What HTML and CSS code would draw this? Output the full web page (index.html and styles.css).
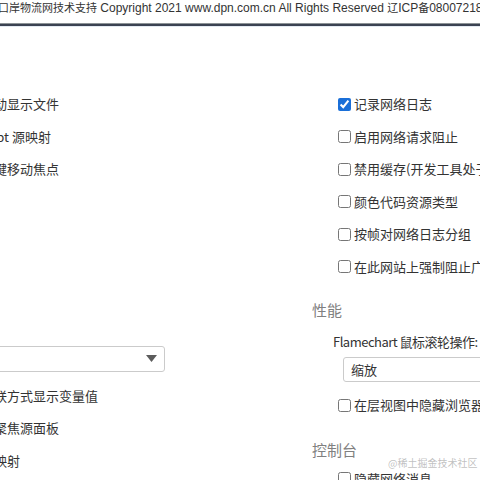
FILE: index.html
```html
<!DOCTYPE html>
<html lang="zh-CN">
<head>
<meta charset="utf-8">
<title>设置</title>
<link rel="stylesheet" href="styles.css">
</head>
<body>
<div class="footer"><span class="cn">口岸物流网技术支持</span> Copyright 2021 www.dpn.com.cn All Rights Reserved <span class="cn">辽</span>ICP<span class="cn">备</span>08007218<span class="cn">号</span></div>
<div class="rule"></div>
<div class="panel">
  <div class="col left">
    <label class="row"><input type="checkbox"><span>自动显示文件</span></label>
    <label class="row"><input type="checkbox" checked><span>cript 源映射</span></label>
    <label class="row"><input type="checkbox" checked><span>按键移动焦点</span></label>
    <div class="select wide">
      <span class="value">无</span>
      <svg class="arrow" width="11" height="7" viewBox="0 0 11 7"><path d="M0 0H11L5.5 7Z" fill="#5c5c5c"/></svg>
    </div>
    <label class="row after-select"><input type="checkbox" checked><span>内联方式显示变量值</span></label>
    <label class="row"><input type="checkbox" checked><span>时聚焦源面板</span></label>
    <label class="row"><input type="checkbox" checked><span>源映射</span></label>
  </div>
  <div class="col right">
    <label class="row"><input type="checkbox" checked><span>记录网络日志</span></label>
    <label class="row"><input type="checkbox"><span>启用网络请求阻止</span></label>
    <label class="row"><input type="checkbox"><span>禁用缓存(开发工具处于打开状态时)</span></label>
    <label class="row"><input type="checkbox"><span>颜色代码资源类型</span></label>
    <label class="row"><input type="checkbox"><span>按帧对网络日志分组</span></label>
    <label class="row"><input type="checkbox"><span>在此网站上强制阻止广告</span></label>
    <h3 class="heading">性能</h3>
    <div class="field-label">Flamechart 鼠标滚轮操作:</div>
    <div class="select narrow"><span class="value">缩放</span></div>
    <label class="row after-field"><input type="checkbox"><span>在层视图中隐藏浏览器组件</span></label>
    <h3 class="heading console">控制台</h3>
    <label class="row"><input type="checkbox"><span>隐藏网络消息</span></label>
  </div>
</div>
<div class="watermark">@稀土掘金技术社区</div>
</body>
</html>
```
FILE: styles.css
```css
html, body {
  margin: 0;
  padding: 0;
}
body {
  width: 480px;
  height: 480px;
  overflow: hidden;
  position: relative;
  background: #ffffff;
  color: #333333;
  font-family: "Noto Sans CJK SC", "Noto Sans", sans-serif;
  font-size: 13px;
}
.footer {
  font-family: "Liberation Sans", "Noto Sans CJK SC", sans-serif;
  font-size: 12px;
  line-height: 14px;
  height: 23px;
  white-space: nowrap;
  margin-left: -2px;
  color: #333333;
}
.footer .cn {
  font-family: "Noto Sans CJK SC", sans-serif;
  font-size: 11px;
}
.rule {
  height: 3px;
  background: linear-gradient(#8d9396 0 1px, #3b4252 1px);
  border-bottom: 1px solid #e3eaf2;
}
.panel {
  display: flex;
  margin-left: -35px;
  padding-top: 61px;
}
.col {
  display: flex;
  flex-direction: column;
  align-items: flex-start;
}
.left {
  flex: 0 0 347px;
}
.right {
  flex: 1 0 auto;
}
.row {
  display: flex;
  align-items: center;
  gap: 3px;
  height: 32.5px;
  white-space: nowrap;
  line-height: 20px;
}
.right .row {
  padding-left: 26px;
}
.row input {
  margin: 0;
  width: 13px;
  height: 13px;
  accent-color: #1a6fd8;
  flex: none;
}
.select {
  box-sizing: border-box;
  display: flex;
  align-items: center;
  justify-content: space-between;
  border: 1px solid #cbcbcb;
  border-radius: 3px;
  background: #ffffff;
  white-space: nowrap;
}
.select.wide {
  width: 200px;
  height: 26px;
  margin-top: 160px;
  padding: 0 7px 0 8px;
}
.select.narrow {
  width: 200px;
  height: 25px;
  margin-left: 31px;
  margin-top: 5px;
  padding: 0 7px;
}
.value {
  line-height: 20px;
}
.arrow {
  display: block;
}
.row.after-select {
  margin-top: 8px;
}
.heading {
  margin: 16px 0 0 0;
  font-size: 15px;
  font-weight: normal;
  line-height: 22px;
  color: #808080;
}
.heading.console {
  margin-top: 17px;
  margin-bottom: 2px;
}
.field-label {
  margin-top: 11px;
  padding-left: 21px;
  line-height: 20px;
  white-space: nowrap;
  letter-spacing: -0.5px;
}
.row.after-field {
  margin-top: 7px;
}
.watermark {
  position: absolute;
  left: 388px;
  top: 456px;
  font-size: 10px;
  line-height: 14px;
  color: rgba(140, 140, 140, 0.55);
  white-space: nowrap;
}
```
